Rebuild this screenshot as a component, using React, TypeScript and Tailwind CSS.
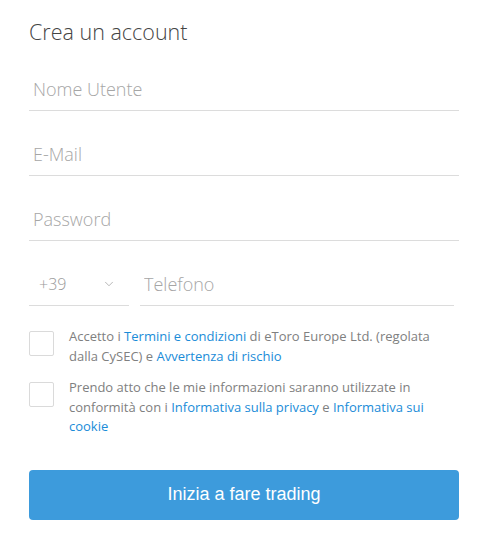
import { ChevronDown } from "lucide-react";

const FIELDS = ["Nome Utente", "E-Mail", "Password"];

function Field({ placeholder }: { placeholder: string }) {
  return (
    <div className="flex h-[65px] items-end">
      <input
        placeholder={placeholder}
        className="h-[44px] w-full border-b border-[#dcdcdc] bg-transparent px-[4px] pt-[1px] text-[18px] font-light text-[#555] outline-none placeholder:text-[#a6a6a6]"
      />
    </div>
  );
}

function Check({ children }: { children: React.ReactNode }) {
  return (
    <label className="flex items-start gap-[15px]">
      <span className="mt-[4px] h-[25px] w-[25px] shrink-0 rounded-[2px] border border-[#dadada] bg-white" />
      <span className="text-[13px] leading-[19.5px] text-[#808080]">{children}</span>
    </label>
  );
}

const link = "text-[#1a8cd8]";

export default function App() {
  return (
    <div
      className="h-[539px] w-[482px] bg-white px-[29px] pr-[23px] pt-[17px]"
      style={{ fontFamily: '"Open Sans", sans-serif' }}
    >
      <h1 className="text-[21.5px] font-light leading-[30px] text-[#444]">Crea un account</h1>

      <div className="-mt-[1px]">
        {FIELDS.map((f) => (
          <Field key={f} placeholder={f} />
        ))}

        <div className="flex h-[65px] items-end gap-[11px]">
          <div className="flex h-[44px] w-[100px] items-center justify-between border-b border-[#dcdcdc] pl-[10px] pr-[13px] pt-[1px]">
            <span className="text-[16px] font-light text-[#999]">+39</span>
            <ChevronDown size={14} strokeWidth={1.2} className="text-[#999]" />
          </div>
          <input
            placeholder="Telefono"
            className="h-[44px] w-[314px] border-b border-[#dcdcdc] bg-transparent px-[4px] pt-[1px] text-[18px] font-light text-[#555] outline-none placeholder:text-[#a6a6a6]"
          />
        </div>
      </div>

      <div className="mt-[21px] flex flex-col gap-[12px] pr-[10px]">
        <Check>
          Accetto i <a className={link}>Termini e condizioni</a> di eToro Europe Ltd. (regolata dalla CySEC) e{" "}
          <a className={link}>Avvertenza di rischio</a>
        </Check>
        <Check>
          Prendo atto che le mie informazioni saranno utilizzate in conformità con i{" "}
          <a className={link}>Informativa sulla privacy</a> e <a className={link}>Informativa sui cookie</a>
        </Check>
      </div>

      <button
        className="mt-[33px] flex h-[50px] w-[430px] items-center justify-center rounded-[4px] bg-[#3d9bdc] text-[18px] text-white"
        style={{ fontFamily: '"Liberation Sans", Arial, sans-serif' }}
      >
        Inizia a fare trading
      </button>
    </div>
  );
}
